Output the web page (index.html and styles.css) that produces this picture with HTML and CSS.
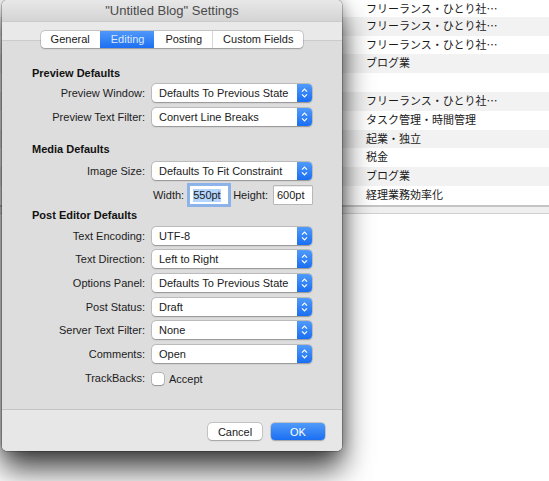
FILE: index.html
```html
<!DOCTYPE html>
<html>
<head>
<meta charset="utf-8">
<title>Untitled Blog Settings</title>
<link rel="stylesheet" href="styles.css">
</head>
<body>
<div class="screen">
  <div class="list">
    <div class="list-row">フリーランス・ひとり社…</div>
    <div class="list-row">フリーランス・ひとり社…</div>
    <div class="list-row">フリーランス・ひとり社…</div>
    <div class="list-row">ブログ業</div>
    <div class="list-row"></div>
    <div class="list-row">フリーランス・ひとり社…</div>
    <div class="list-row">タスク管理・時間管理</div>
    <div class="list-row">起業・独立</div>
    <div class="list-row">税金</div>
    <div class="list-row">ブログ業</div>
    <div class="list-row">経理業務効率化</div>
  </div>
  <div class="hscroll"></div>

  <div class="window">
    <div class="titlebar">"Untitled Blog" Settings</div>
    <div class="tabstrip">
      <div class="segmented">
        <span class="seg">General</span>
        <span class="seg active">Editing</span>
        <span class="seg">Posting</span>
        <span class="seg">Custom Fields</span>
      </div>
    </div>
    <div class="pane">
      <h3 class="section">Preview Defaults</h3>
      <div class="form preview">
        <label>Preview Window:</label>
        <div class="popup"><span>Defaults To Previous State</span><span class="stepper"><svg width="15" height="18" viewBox="0 0 15 18"><path d="M5 7.6 L7.5 5.1 L10 7.6 M5 10.4 L7.5 12.9 L10 10.4" fill="none" stroke="#fff" stroke-width="1.2"/></svg></span></div>
        <label>Preview Text Filter:</label>
        <div class="popup"><span>Convert Line Breaks</span><span class="stepper"><svg width="15" height="18" viewBox="0 0 15 18"><path d="M5 7.6 L7.5 5.1 L10 7.6 M5 10.4 L7.5 12.9 L10 10.4" fill="none" stroke="#fff" stroke-width="1.2"/></svg></span></div>
      </div>

      <h3 class="section media-head">Media Defaults</h3>
      <div class="form media">
        <label>Image Size:</label>
        <div class="popup"><span>Defaults To Fit Constraint</span><span class="stepper"><svg width="15" height="18" viewBox="0 0 15 18"><path d="M5 7.6 L7.5 5.1 L10 7.6 M5 10.4 L7.5 12.9 L10 10.4" fill="none" stroke="#fff" stroke-width="1.2"/></svg></span></div>
        <span></span>
        <div class="dims">
          <span>Width:</span>
          <span class="field focused"><span class="sel">550pt</span></span>
          <span class="dim-label">Height:</span>
          <span class="field">600pt</span>
        </div>
      </div>

      <h3 class="section post-head">Post Editor Defaults</h3>
      <div class="form post">
        <label>Text Encoding:</label>
        <div class="popup"><span>UTF-8</span><span class="stepper"><svg width="15" height="18" viewBox="0 0 15 18"><path d="M5 7.6 L7.5 5.1 L10 7.6 M5 10.4 L7.5 12.9 L10 10.4" fill="none" stroke="#fff" stroke-width="1.2"/></svg></span></div>
        <label>Text Direction:</label>
        <div class="popup"><span>Left to Right</span><span class="stepper"><svg width="15" height="18" viewBox="0 0 15 18"><path d="M5 7.6 L7.5 5.1 L10 7.6 M5 10.4 L7.5 12.9 L10 10.4" fill="none" stroke="#fff" stroke-width="1.2"/></svg></span></div>
        <label>Options Panel:</label>
        <div class="popup"><span>Defaults To Previous State</span><span class="stepper"><svg width="15" height="18" viewBox="0 0 15 18"><path d="M5 7.6 L7.5 5.1 L10 7.6 M5 10.4 L7.5 12.9 L10 10.4" fill="none" stroke="#fff" stroke-width="1.2"/></svg></span></div>
        <label>Post Status:</label>
        <div class="popup"><span>Draft</span><span class="stepper"><svg width="15" height="18" viewBox="0 0 15 18"><path d="M5 7.6 L7.5 5.1 L10 7.6 M5 10.4 L7.5 12.9 L10 10.4" fill="none" stroke="#fff" stroke-width="1.2"/></svg></span></div>
        <label>Server Text Filter:</label>
        <div class="popup"><span>None</span><span class="stepper"><svg width="15" height="18" viewBox="0 0 15 18"><path d="M5 7.6 L7.5 5.1 L10 7.6 M5 10.4 L7.5 12.9 L10 10.4" fill="none" stroke="#fff" stroke-width="1.2"/></svg></span></div>
        <label>Comments:</label>
        <div class="popup"><span>Open</span><span class="stepper"><svg width="15" height="18" viewBox="0 0 15 18"><path d="M5 7.6 L7.5 5.1 L10 7.6 M5 10.4 L7.5 12.9 L10 10.4" fill="none" stroke="#fff" stroke-width="1.2"/></svg></span></div>
        <label>TrackBacks:</label>
        <div class="check"><span class="box"></span><span>Accept</span></div>
      </div>
    </div>
    <div class="footer">
      <button class="btn">Cancel</button>
      <button class="btn primary">OK</button>
    </div>
  </div>
</div>
</body>
</html>
```
FILE: styles.css
```css
* { box-sizing: border-box; }
html, body { margin: 0; padding: 0; }
body {
  width: 549px;
  height: 481px;
  overflow: hidden;
  background: #fff;
  font-family: "Liberation Sans", Arial, sans-serif;
  font-size: 11px;
  color: #1c1c1c;
}
.screen {
  position: relative;
  width: 549px;
  height: 481px;
  overflow: hidden;
  background: #fff;
}
.list-row {
  height: 18.8px;
  line-height: 12px;
  padding-top: 2px;
  padding-left: 366px;
  font-family: "Noto Sans CJK JP", sans-serif;
  font-size: 11px;
  color: #1a1a1a;
  white-space: nowrap;
}
.list-row:first-child { height: 16.8px; padding-top: 0; line-height: 16px; }
.list-row:nth-child(even) { background: #f2f2f2; }
.hscroll {
  height: 9px;
  border-top: 2px solid #c4c4c4;
  border-bottom: 1px solid #d0d0d0;
  background: #efefef;
}

.window {
  position: absolute;
  left: 2px;
  top: 0;
  width: 340px;
  height: 451px;
  display: flex;
  flex-direction: column;
  border-radius: 5px;
  overflow: hidden;
  background: #e8e8e8;
  box-shadow: 0 0 0 0.5px rgba(0,0,0,0.4), 0 0 14px rgba(0,0,0,0.28), 0 18px 30px rgba(0,0,0,0.75);
}
.titlebar {
  height: 22px;
  flex: none;
  display: flex;
  align-items: center;
  justify-content: center;
  font-size: 13px;
  color: #4a4a4a;
  background: linear-gradient(#e8e8e8, #d4d4d4);
  border-bottom: 1px solid #cbcbcb;
}
.tabstrip {
  height: 26px;
  flex: none;
  padding-top: 9px;
  display: flex;
  justify-content: center;
  background: #e9e9e9;
}
.segmented {
  position: relative;
  z-index: 1;
  display: flex;
  height: 17px;
  background: #fff;
  border-radius: 4px;
  overflow: hidden;
  box-shadow: 0 0 0 0.5px rgba(0,0,0,0.25), 0 0.5px 1.5px rgba(0,0,0,0.2);
}
.seg {
  padding: 0 10px;
  line-height: 17px;
  color: #1a1a1a;
  border-left: 1px solid #d6d6d6;
}
.seg:first-child { border-left: none; }
.seg.active {
  background: linear-gradient(#4f98f9, #1d6ff2);
  color: #dce9ff;
  border-left-color: transparent;
}
.seg.active + .seg { border-left-color: transparent; }

.pane {
  flex: 1;
  margin-top: -8px;
  padding-top: 24px;
  background: #dddddd;
  border-top: 1px solid #cccccc;
  border-bottom: 1px solid #c4c4c4;
}
.section {
  margin: 0;
  padding-left: 30px;
  font-size: 11px;
  font-weight: bold;
  line-height: 16px;
  color: #111;
}
.media-head { margin-top: 12px; }
.post-head { line-height: 14px; margin-top: 1px; }
.form {
  display: grid;
  grid-template-columns: 143px 160px;
  column-gap: 7px;
  grid-auto-rows: 24px;
  align-items: center;
}
.form label { text-align: right; color: #1c1c1c; }
.form.media { margin-top: 2px; }
.form.post { margin-top: 2px; grid-auto-rows: 23.67px; }

.popup {
  height: 18px;
  display: flex;
  align-items: center;
  padding-left: 7px;
  background: #fff;
  border-radius: 4px;
  box-shadow: 0 0 0 0.5px rgba(0,0,0,0.22), 0 0.5px 1.5px rgba(0,0,0,0.25);
  color: #1a1a1a;
  overflow: hidden;
}
.stepper {
  margin-left: auto;
  width: 15px;
  height: 18px;
  flex: none;
  display: flex;
  background: linear-gradient(#519bfa, #1a6ef2);
}
.dims {
  display: flex;
  align-items: center;
  justify-content: flex-end;
}
.field {
  width: 38px;
  height: 18px;
  display: flex;
  align-items: center;
  padding-left: 3px;
  margin-left: 6px;
  background: #fff;
  color: #1a1a1a;
  box-shadow: 0 0 0 0.5px rgba(0,0,0,0.35), inset 0 0.5px 0 rgba(0,0,0,0.15);
}
.field.focused {
  box-shadow: 0 0 0 1px #8db5ee, 0 0 0 3px rgba(106,160,236,0.7);
}
.sel { background: #b4d5fe; line-height: 13px; }
.dim-label { margin-left: 5px; }
.check { display: flex; align-items: center; margin-top: 2px; }
.box {
  width: 12px;
  height: 12px;
  border-radius: 3px;
  background: #fff;
  box-shadow: 0 0 0 0.5px rgba(0,0,0,0.3), 0 0.5px 1px rgba(0,0,0,0.2);
  margin-right: 5px;
}

.footer {
  height: 41px;
  flex: none;
  display: flex;
  justify-content: flex-end;
  align-items: flex-start;
  gap: 9px;
  padding: 13px 17px 0 0;
  background: #e7e7e7;
}
.btn {
  width: 54px;
  height: 17px;
  padding: 0;
  border: none;
  border-radius: 4px;
  font-family: "Liberation Sans", Arial, sans-serif;
  font-size: 11px;
  color: #1a1a1a;
  background: #fff;
  box-shadow: 0 0 0 0.5px rgba(0,0,0,0.25), 0 0.5px 1.5px rgba(0,0,0,0.2);
}
.btn.primary {
  color: #fff;
  background: linear-gradient(#519bfa, #1a6ef2);
}
```
